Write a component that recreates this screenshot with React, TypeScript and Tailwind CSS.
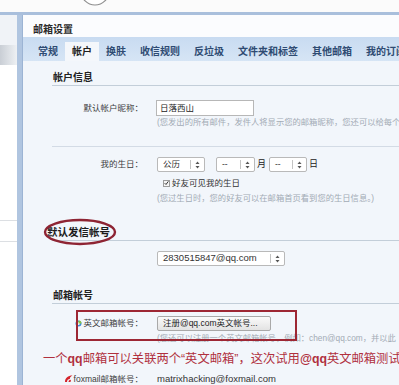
import React from "react";

type Tab = { label: string; active?: boolean };

const tabs: Tab[] = [
  { label: "常规" },
  { label: "帐户", active: true },
  { label: "换肤" },
  { label: "收信规则" },
  { label: "反垃圾" },
  { label: "文件夹和标签" },
  { label: "其他邮箱" },
  { label: "我的订阅" },
];

function Arrows() {
  return (
    <svg width="5" height="8" viewBox="0 0 5 8">
      <path d="M2.5 0.5 L4.5 3 L0.5 3 Z" fill="#555" />
      <path d="M2.5 7.5 L4.5 5 L0.5 5 Z" fill="#555" />
    </svg>
  );
}

function Select({ value, className }: { value: string; className: string }) {
  return (
    <div
      className={`flex items-center h-[15px] bg-white border border-[#b9b9b9] rounded-[2px] pl-[5px] pr-[4px] text-[8.5px] text-[#333] ${className}`}
    >
      <span className="flex-1 whitespace-nowrap">{value}</span>
      <span className="w-px h-[9px] bg-[#c4c4c4] mr-[4px]" />
      <Arrows />
    </div>
  );
}

function SectionTitle({ title, className }: { title: string; className: string }) {
  return (
    <div className={`flex items-end border-b border-[#c3ced9] ${className}`}>
      <span className="ml-[1px] text-[10px] leading-[12px] font-bold text-[#222]">{title}</span>
    </div>
  );
}

function Label({ children }: { children: React.ReactNode }) {
  return (
    <div className="w-[91px] flex items-center justify-end text-[8.5px] text-[#3d3d3d] whitespace-nowrap">
      {children}
    </div>
  );
}

function Hint({ text, className }: { text: string; className: string }) {
  return (
    <div className={`ml-[105px] h-[10px] text-[8.3px] leading-[10px] text-[#a2abb5] whitespace-nowrap ${className}`}>
      {text}
    </div>
  );
}

export default function App() {
  return (
    <div className="w-[399px] h-[385px] overflow-hidden bg-white flex flex-col [font-family:'Liberation_Sans','Noto_Sans_CJK_SC',sans-serif]">
      {/* top strip */}
      <div className="h-[12px] flex bg-[#fbfbfb] border-b-[3px] border-[#a9bfdc] box-content">
        <svg width="30" height="12" viewBox="0 0 30 12" className="ml-[80px]">
          <circle cx="15" cy="-9" r="14" fill="#fff" stroke="#8d8d8d" strokeWidth="1.2" />
        </svg>
      </div>

      <div className="flex flex-1 min-h-0">
        {/* left strip */}
        <div className="w-[17px] flex flex-col bg-white">
          <div className="h-[30px] bg-[#f0f3f7]" />
          <div className="h-[20px] bg-gradient-to-r from-[#c9ced5] to-[#eef1f4]" />
          <div className="h-[155px]" />
          <div className="h-px bg-[#dcdfe3]" />
          <div className="h-[20px]" />
          <div className="h-px bg-[#dcdfe3]" />
        </div>
        <div className="w-[6px] bg-[#b0c5e0] border-r border-[#9cb4d4]" />

        {/* main panel */}
        <div className="flex-1 flex flex-col bg-[#f2f6fb] overflow-hidden">
          <div className="h-[23px] bg-[#fbfcfe] flex items-center pt-[6px] pl-[10px]">
            <span className="text-[10px] font-bold text-[#2a2a2a]">邮箱设置</span>
          </div>

          <div className="h-[25px] flex items-end pl-[8px] bg-gradient-to-b from-[#c8dbf1] to-[#d6e5f5]">
            {tabs.map((t) => (
              <div
                key={t.label}
                className={`h-[19px] px-[7px] flex items-center text-[10px] font-bold whitespace-nowrap ${
                  t.active ? "bg-[#f4f7fb] text-[#1f1f1f]" : "text-[#2e4b72]"
                }`}
              >
                {t.label}
              </div>
            ))}
          </div>

          {/* content */}
          <div className="flex flex-col pl-[29px]">
            <SectionTitle title="帐户信息" className="h-[25px] pb-[1px]" />

            <div className="mt-[14px] h-[16px] flex">
              <Label>默认帐户昵称：</Label>
              <div className="ml-[13px] w-[98px] h-[16px] bg-white border border-[#b7b7b7] flex items-center pl-[3px] text-[8.5px] text-[#222]">
                日落西山
              </div>
            </div>
            <Hint text="(您发出的所有邮件，发件人将显示您的邮箱昵称，您还可以给每个帐" className="mt-[1px]" />

            <div className="mt-[19px] h-px bg-[#d3dbe5]" />

            <div className="mt-[10px] h-[15px] flex items-center">
              <Label>我的生日：</Label>
              <Select value="公历" className="ml-[14px] w-[48px]" />
              <Select value="--" className="ml-[11px] w-[39px]" />
              <span className="ml-[2px] text-[9px] text-[#222]">月</span>
              <Select value="--" className="ml-[3px] w-[38px]" />
              <span className="ml-[2px] text-[9px] text-[#222]">日</span>
            </div>

            <div className="mt-[5px] h-[12px] flex items-center ml-[111px]">
              <span className="w-[7px] h-[7px] bg-[#f4f4f4] border border-[#9c9c9c] flex items-center justify-center">
                <svg width="6" height="6" viewBox="0 0 6 6">
                  <path d="M0.8 3.2 L2.4 4.8 L5.2 1" fill="none" stroke="#333" strokeWidth="1.2" />
                </svg>
              </span>
              <span className="ml-[2px] text-[8.5px] text-[#333]">好友可见我的生日</span>
            </div>
            <Hint text="(您过生日时，您的好友可以在邮箱首页看到您的生日信息。)" className="mt-[4px]" />

            <div className="relative h-[38px] flex items-end pb-[2px] border-b border-[#c3ced9]">
              <span className="-ml-[5px] text-[10.5px] leading-[12px] font-bold text-[#1b1b1b]">默认发信帐号</span>
              <svg width="74" height="29" viewBox="0 0 74 29" className="absolute -left-[9px] top-[15px]">
                <ellipse cx="37" cy="14" rx="35" ry="12" fill="none" stroke="#8e2433" strokeWidth="2.4" />
              </svg>
            </div>

            <div className="mt-[10px] h-[15px] flex">
              <div className="w-[91px]" />
              <Select value="2830515847@qq.com" className="ml-[14px] w-[128px] text-[9.5px]" />
            </div>

            <SectionTitle title="邮箱帐号" className="h-[38px] pb-[1px]" />

            <div className="relative mt-[6px] flex flex-col">
              <div className="absolute left-[24px] top-0 w-[221px] h-[31px] border-2 border-[#9d2734]" />
              <div className="mt-[6px] h-[15px] flex items-center">
                <Label>
                  <svg width="7" height="7" viewBox="0 0 7 7" className="mr-[1px]">
                    <circle cx="3.5" cy="3.5" r="3" fill="#3f8fd6" />
                    <circle cx="3.5" cy="3.5" r="1.4" fill="#fff" />
                    <path d="M3.5 0.5 A3 3 0 0 1 6.5 3.5 L3.5 3.5 Z" fill="#8cc63f" />
                  </svg>
                  英文邮箱帐号：
                </Label>
                <div className="ml-[14px] w-[114px] h-[15px] flex items-center pl-[5px] bg-gradient-to-b from-[#fafafa] to-[#e3e3e3] border border-[#a9a9a9] rounded-[2px] text-[8.5px] text-[#222] whitespace-nowrap">
                  注册@qq.com英文帐号...
                </div>
              </div>
              <Hint text="(您还可以注册一个英文邮箱帐号，例如：chen@qq.com，并以此" className="mt-[2px]" />
            </div>

            <div className="mt-[8px] -ml-[9px] h-[16px] leading-[16px] text-[12.3px] text-[#b0303e] whitespace-nowrap">
              一个<b>qq</b>邮箱可以关联两个“英文邮箱”，这次试用<b>@qq</b>英文邮箱测试
            </div>

            <div className="mt-[6px] h-[12px] flex items-center">
              <Label>
                <svg width="9" height="8" viewBox="0 0 9 8" className="mr-[1px]">
                  <path d="M1 7 C1 3 4 0.5 8.5 0.5 C6 2 5.5 3 6 4 C4 4 3 5 3 7 Z" fill="#d4232b" />
                  <path d="M4.5 7 C4.5 5.5 5.5 4.8 7 4.8 L6.5 7 Z" fill="#d4232b" />
                </svg>
                foxmail邮箱帐号：
              </Label>
              <span className="ml-[14px] text-[9.5px] text-[#333] whitespace-nowrap">matrixhacking@foxmail.com</span>
            </div>
          </div>
        </div>
      </div>
    </div>
  );
}
